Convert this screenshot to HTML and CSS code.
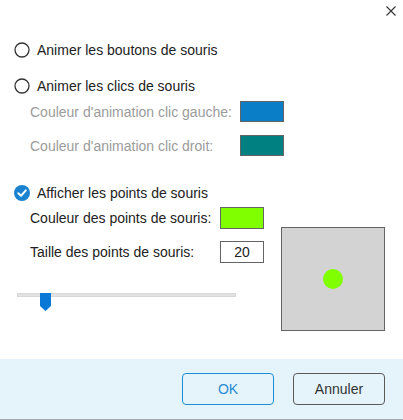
FILE: index.html
```html
<!DOCTYPE html>
<html lang="fr">
<head>
<meta charset="utf-8">
<link rel="stylesheet" href="styles.css">
</head>
<body>
<div class="dialog">
  <div class="titlebar">
    <svg class="close" width="10" height="10" viewBox="0 0 10 10"><path d="M0.5 0.5 L9.5 9.5 M9.5 0.5 L0.5 9.5" stroke="#333" stroke-width="1.1" fill="none"/></svg>
  </div>
  <div class="content">
    <div class="row row-a">
      <svg class="radio" width="16" height="16" viewBox="0 0 16 16"><circle cx="8" cy="8" r="7" fill="#fff" stroke="#333" stroke-width="1.3"/></svg>
      <span class="label">Animer les boutons de souris</span>
    </div>
    <div class="row row-b">
      <svg class="radio" width="16" height="16" viewBox="0 0 16 16"><circle cx="8" cy="8" r="7" fill="#fff" stroke="#333" stroke-width="1.3"/></svg>
      <span class="label">Animer les clics de souris</span>
    </div>
    <div class="sub row-c disabled">
      <span class="sublabel wide">Couleur d'animation clic gauche:</span>
      <span class="swatch blue"></span>
    </div>
    <div class="sub row-d disabled">
      <span class="sublabel wide">Couleur d'animation clic droit:</span>
      <span class="swatch teal"></span>
    </div>
    <div class="row row-e">
      <svg class="radio" width="16" height="16" viewBox="0 0 16 16"><circle cx="8" cy="8" r="8" fill="#1b82d1"/><path d="M4.3 8.2 L7 10.8 L11.8 5.4" stroke="#fff" stroke-width="2" fill="none" stroke-linecap="round" stroke-linejoin="round"/></svg>
      <span class="label">Afficher les points de souris</span>
    </div>
    <div class="split">
      <div class="left">
        <div class="sub row-f">
          <span class="sublabel">Couleur des points de souris:</span>
          <span class="swatch green"></span>
        </div>
        <div class="sub row-g">
          <span class="sublabel">Taille des points de souris:</span>
          <span class="numbox">20</span>
        </div>
        <div class="slider">
          <div class="track"></div>
          <svg class="thumb" width="11" height="18" viewBox="0 0 11 18"><path d="M0 0 H11 V13 L5.5 18 L0 13 Z" fill="#0a78d7"/></svg>
        </div>
      </div>
      <div class="preview"><span class="dot"></span></div>
    </div>
  </div>
  <div class="footer">
    <button class="btn ok">OK</button>
    <button class="btn cancel">Annuler</button>
  </div>
</div>
</body>
</html>
```
FILE: styles.css
```css
html, body {
  margin: 0;
  padding: 0;
  background: #fff;
}
body {
  font-family: "Liberation Sans", Arial, sans-serif;
  font-size: 14px;
  color: #222;
}
.dialog {
  width: 403px;
  height: 420px;
  display: flex;
  flex-direction: column;
}
.titlebar {
  height: 39px;
  display: flex;
  justify-content: flex-end;
  align-items: flex-start;
  padding-right: 7px;
  box-sizing: border-box;
}
.close {
  margin-top: 6px;
  display: block;
}
.content {
  flex: 1;
  padding-left: 14px;
}
.row {
  display: flex;
  align-items: center;
  height: 22px;
}
.radio {
  display: block;
  flex: none;
}
.label {
  margin-left: 7px;
  line-height: 22px;
}
.row-b { margin-top: 14px; }
.sub {
  display: flex;
  align-items: center;
  padding-left: 16px;
  height: 22px;
}
.row-c { margin-top: 4px; height: 21px; }
.row-d { margin-top: 13px; height: 21px; }
.row-e { margin-top: 26px; }
.disabled { color: #9b9b9b; }
.sublabel {
  width: 190px;
  flex: none;
  line-height: 22px;
}
.sublabel.wide { width: 210px; }
.swatch {
  width: 44px;
  height: 21px;
  box-sizing: border-box;
  border: 1px solid #646464;
  flex: none;
}
.swatch.blue { background: #0a7fc7; }
.swatch.teal { background: #008080; }
.swatch.green { background: #80ff00; height: 22px; }
.split {
  display: flex;
  align-items: flex-start;
  margin-top: 3px;
}
.left { width: 250px; flex: none; }
.row-g { margin-top: 12px; }
.numbox {
  width: 44px;
  height: 22px;
  box-sizing: border-box;
  border: 1px solid #646464;
  text-align: center;
  line-height: 20px;
  flex: none;
}
.slider {
  position: relative;
  margin-top: 30px;
  margin-left: 3px;
  width: 219px;
  height: 18px;
}
.track {
  margin-top: 6px;
  height: 4px;
  box-sizing: border-box;
  background: #e2e2e2;
  border: 1px solid #d8d8d8;
}
.thumb {
  position: absolute;
  left: 23px;
  top: 0;
  display: block;
}
.preview {
  margin-left: 17px;
  margin-top: 20px;
  width: 104px;
  height: 104px;
  box-sizing: border-box;
  background: #d3d3d3;
  border: 1px solid #646464;
  display: flex;
  align-items: center;
  justify-content: center;
}
.dot {
  width: 20px;
  height: 20px;
  border-radius: 50%;
  background: #80ff00;
}
.footer {
  height: 61px;
  box-sizing: border-box;
  background: #e5f3fb;
  border-bottom: 1px solid #a3a9ad;
  display: flex;
  justify-content: flex-end;
  align-items: flex-start;
  padding-top: 14px;
  padding-right: 18px;
  gap: 19px;
}
.btn {
  width: 92px;
  height: 32px;
  box-sizing: border-box;
  border-radius: 4px;
  background: #e5f3fb;
  font-family: "Liberation Sans", Arial, sans-serif;
  font-size: 14px;
  padding: 0;
}
.btn.ok {
  border: 1px solid #1a8fd6;
  color: #2a8bd1;
}
.btn.cancel {
  border: 1px solid #5a5a5a;
  color: #333;
}
```
